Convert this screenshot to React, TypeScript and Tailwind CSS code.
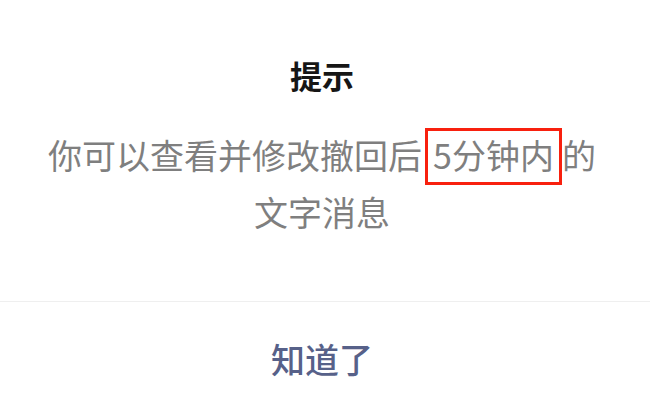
export default function App() {
  return (
    <div className="flex h-[408px] w-[650px] flex-col bg-white pr-[6px] font-['Noto_Sans_CJK_SC','Noto_Sans',sans-serif]">
      <div className="flex h-[301px] flex-col items-center pt-[53px]">
        <h2 className="text-[32px] leading-[44px] font-bold text-[#161616]">提示</h2>
        <p className="mt-[31px] w-[560px] text-center text-[34px] leading-[54px] text-[#7f7f7f]">
          你可以查看并修改撤回后
          <span className="ml-[3px] inline-block border-[3px] border-[#f8200e] px-[5px] pb-[3px] leading-[48px]">
            5分钟内
          </span>
          的文字消息
        </p>
      </div>
      <div className="-mr-[6px] flex flex-1 items-center justify-center border-t border-[#efefef] pt-[8px] pr-[6px]">
        <button className="text-[34px] leading-[50px] font-medium text-[#576189]">知道了</button>
      </div>
    </div>
  );
}
